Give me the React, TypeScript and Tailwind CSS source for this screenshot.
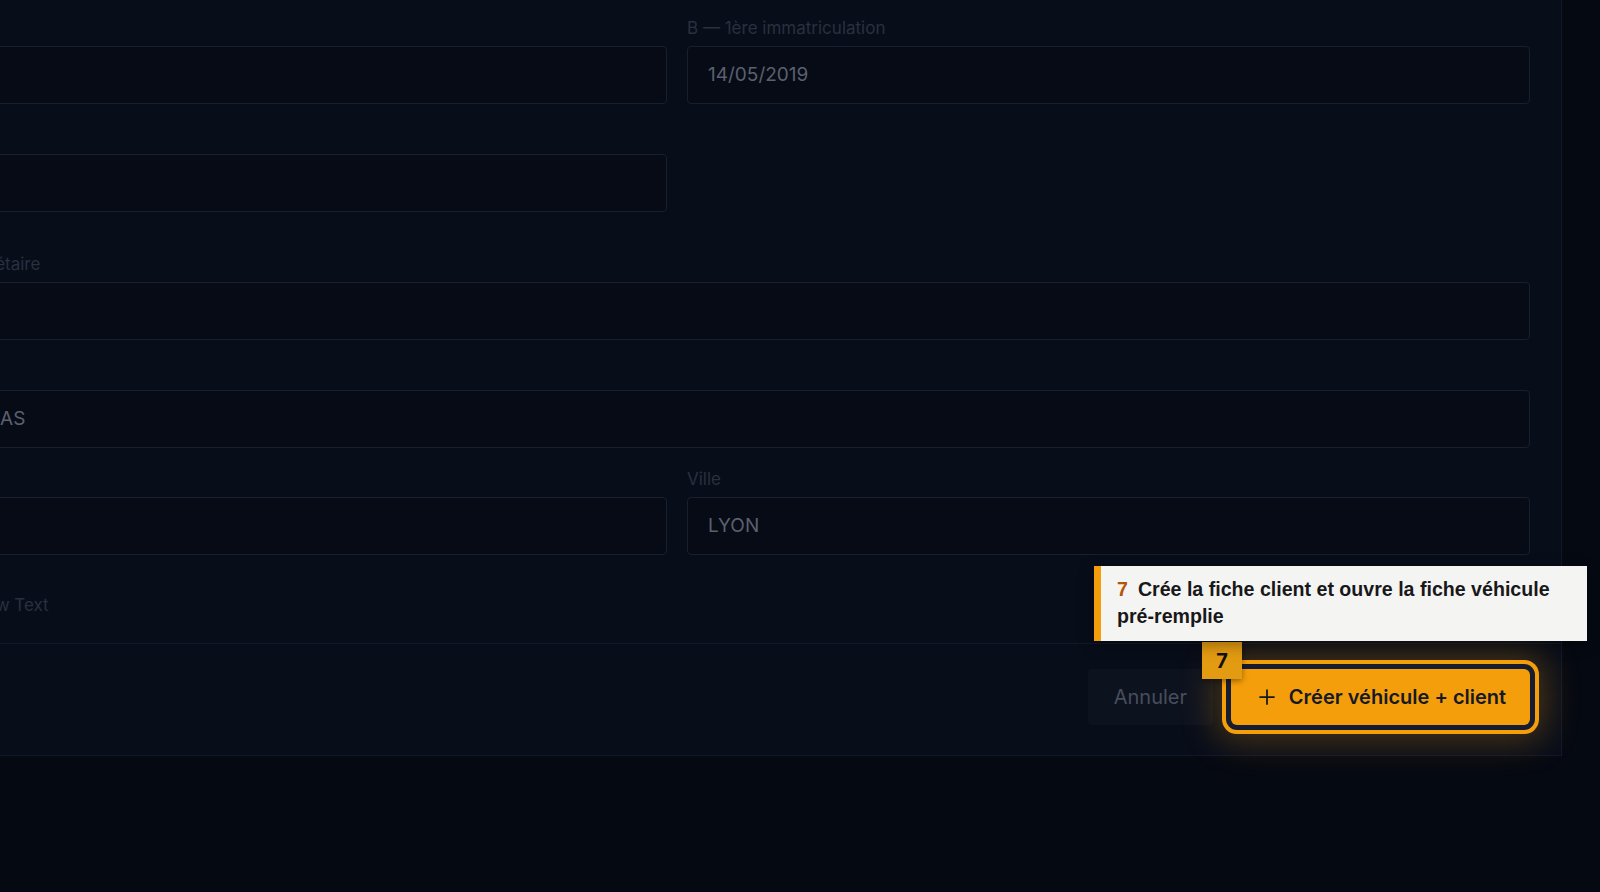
import { Plus } from "lucide-react";

function Label({ children }: { children: React.ReactNode }) {
  return (
    <div className="h-6 mb-1.5 text-[17px] leading-6 text-[#2a303e] whitespace-nowrap">
      {children}
    </div>
  );
}

function Input({ value }: { value?: string }) {
  return (
    <div className="h-[58px] rounded-[4px] border border-[#191f2e] bg-[#070b16] px-5 flex items-center text-[19px] text-[#5a606e] whitespace-nowrap">
      {value}
    </div>
  );
}

function Field({ label, value }: { label: string; value?: string }) {
  return (
    <div className="flex flex-col">
      <Label>{label}</Label>
      <Input value={value} />
    </div>
  );
}

export default function App() {
  return (
    <div className="w-[1600px] h-[892px] overflow-hidden bg-[#050912] font-['Inter','Liberation_Sans',sans-serif]">
      <div className="-ml-[208px] w-[1770px] bg-[#080d1a] border-r border-b border-[#111829]">
        <div className="pl-[38px] pr-[31px] pt-4 flex flex-col">
          <div className="grid grid-cols-[837px_843px] gap-x-5">
            <Field label="A — Immatriculation" />
            <Field label="B — 1ère immatriculation" value="14/05/2019" />
          </div>
          <div className="mt-5 grid grid-cols-[837px_843px] gap-x-5">
            <Field label="E — VIN" />
            <div />
          </div>
          <div className="mt-10">
            <Field label="C.1 — Nom du propriétaire" />
          </div>
          <div className="mt-5">
            <Field label="Adresse" value="124 RUE DES LILAS" />
          </div>
          <div className="mt-[19px] grid grid-cols-[837px_843px] gap-x-5">
            <Field label="Code postal" />
            <Field label="Ville" value="LYON" />
          </div>
          <div className="mt-[38px]">
            <Label>Commentaires — New Text</Label>
          </div>
        </div>

        <div className="mt-5 border-t border-[#111829] pt-[25px] pb-[30px] pr-[31px] flex justify-end items-center gap-[18px]">
          <button className="h-14 px-[26px] rounded-[4px] bg-[#0d121f] text-[20px] text-[#484e5c]">
            Annuler
          </button>
          <button className="relative h-14 w-[299px] rounded-md bg-[#f59e0b] flex items-center justify-center gap-2.5 text-[20px] font-semibold text-[#141925] shadow-[0_0_0_5px_#161d30,0_0_0_9px_#f59e0b,0_0_36px_14px_rgba(245,158,11,0.3)]">
            <Plus size={24} strokeWidth={1.75} />
            <span>Créer véhicule + client</span>
            <span className="absolute left-[-29px] top-[-27px] w-10 h-[37px] bg-[#e39b12] flex items-center justify-center text-[20px] font-bold text-[#111] shadow-[0_2px_6px_rgba(0,0,0,0.4)]">
              7
            </span>
            <div className="absolute left-[-137px] top-[-103px] w-[493px] h-[75px] bg-[#f4f4f2] border-l-[7px] border-[#f59e0b] pl-4 pr-6 py-[10px] text-left font-['Liberation_Sans',sans-serif] text-[19.6px] leading-[27px] font-bold text-[#18181b] shadow-[0_4px_14px_rgba(0,0,0,0.35)]">
              <span className="text-[#b4530a] mr-2.5">7</span>
              Crée la fiche client et ouvre la fiche véhicule pré-remplie
            </div>
          </button>
        </div>
      </div>
    </div>
  );
}
